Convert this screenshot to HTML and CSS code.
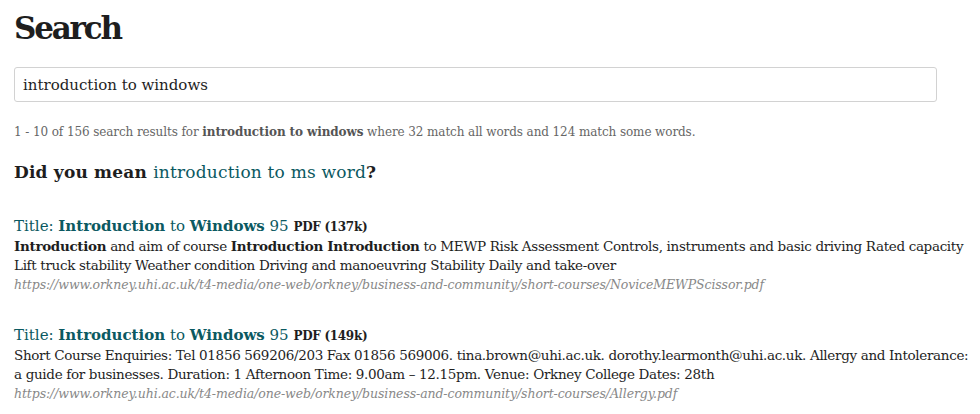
FILE: index.html
```html
<!DOCTYPE html>
<html lang="en">
<head>
<meta charset="utf-8">
<title>Search</title>
<link rel="stylesheet" href="styles.css">
</head>
<body>
<main class="page">
  <h1 class="page-title">Search</h1>
  <form class="search-form">
    <input class="search-input" type="text" value="introduction to windows">
  </form>
  <p class="summary">1 - 10 of 156 search results for <strong>introduction to windows</strong> where 32 match all words and 124 match some words.</p>
  <h2 class="suggest">Did you mean <a href="#" class="suggest-link">introduction to ms word</a>?</h2>
  <ol class="results">
    <li class="result">
      <h3 class="result-title"><a href="#">Title: <b>Introduction</b> to <b>Windows</b> 95</a> <span class="meta">PDF (137k)</span></h3>
      <p class="snippet"><b>Introduction</b> and aim of course <b>Introduction Introduction</b> to MEWP Risk Assessment Controls, instruments and basic driving Rated capacity Lift truck stability Weather condition Driving and manoeuvring Stability Daily and take-over</p>
      <p class="url">https://www.orkney.uhi.ac.uk/t4-media/one-web/orkney/business-and-community/short-courses/NoviceMEWPScissor.pdf</p>
    </li>
    <li class="result">
      <h3 class="result-title"><a href="#">Title: <b>Introduction</b> to <b>Windows</b> 95</a> <span class="meta">PDF (149k)</span></h3>
      <p class="snippet">Short Course Enquiries: Tel 01856 569206/203 Fax 01856 569006. tina.brown@uhi.ac.uk. dorothy.learmonth@uhi.ac.uk. Allergy and Intolerance: a guide for businesses. Duration: 1 Afternoon Time: 9.00am – 12.15pm. Venue: Orkney College Dates: 28th</p>
      <p class="url">https://www.orkney.uhi.ac.uk/t4-media/one-web/orkney/business-and-community/short-courses/Allergy.pdf</p>
    </li>
  </ol>
</main>
</body>
</html>
```
FILE: styles.css
```css
html, body {
  margin: 0;
  padding: 0;
  background: #fff;
}
body {
  font-family: "DejaVu Serif", "Liberation Serif", serif;
  color: #1e1e1e;
}
.page {
  padding: 0 8px 0 14px;
}
.page-title {
  margin: 0;
  padding-top: 8px;
  font-size: 31px;
  line-height: 40px;
  font-weight: bold;
  letter-spacing: -2.2px;
}
.search-form {
  margin: 19px 0 0 0;
  padding-right: 35px;
}
.search-input {
  display: block;
  box-sizing: border-box;
  width: 100%;
  height: 35px;
  border: 1px solid #d2d2d2;
  border-radius: 3px;
  padding: 0 8px;
  font-family: inherit;
  font-size: 15px;
  color: #1e1e1e;
}
.summary {
  margin: 21px 0 0 0;
  font-size: 12px;
  line-height: 18px;
  color: #666;
  letter-spacing: -0.1px;
}
.summary strong {
  color: #555;
}
.suggest {
  margin: 20px 0 0 0;
  font-size: 17px;
  line-height: 22px;
  font-weight: bold;
  letter-spacing: 0.2px;
}
.suggest-link {
  color: #0b5961;
  text-decoration: none;
  font-weight: normal;
}
.results {
  list-style: none;
  margin: 33px 0 0 0;
  padding: 0;
}
.result {
  margin-bottom: 30px;
}
.result-title {
  margin: 0;
  font-size: 15px;
  line-height: 20px;
  font-weight: normal;
}
.result-title a {
  color: #0b5961;
  text-decoration: none;
}
.meta {
  font-size: 12px;
  font-weight: bold;
  color: #1e1e1e;
  letter-spacing: -0.3px;
}
.snippet {
  margin: 0;
  font-size: 13.5px;
  line-height: 19px;
  letter-spacing: -0.33px;
}
.url {
  margin: 0;
  font-size: 12.5px;
  line-height: 20px;
  font-style: italic;
  color: #888;
  letter-spacing: -0.1px;
}
```
